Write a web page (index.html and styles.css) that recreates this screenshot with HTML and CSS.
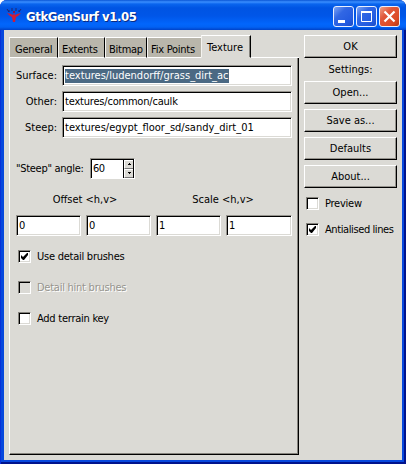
FILE: index.html
```html
<!DOCTYPE html>
<html lang="en">
<head>
<meta charset="utf-8">
<title>GtkGenSurf v1.05</title>
<link rel="stylesheet" href="styles.css">
</head>
<body>
<div class="window">
  <header class="titlebar">
    <svg class="app-icon" width="16" height="16" viewBox="0 0 16 16">
      <path d="M1 1l2 3M6 0v3M10 0v3M15 1l-2 3M2 3h2M12 3h2" stroke="#20276f" fill="none"/>
      <path d="M1 5l4 1 2 1 1-2 1 2 2-1 4-1-3 3-2 1-1 5H7L6 9 4 8z" fill="#d01c38"/>
      <path d="M7 3h2v2H7z" fill="#8b1746"/>
    </svg>
    <h1 class="title">GtkGenSurf v1.05</h1>
    <div class="controls">
      <button class="ctl"><svg width="21" height="21"><path d="M5 14h7v3H5z" fill="#fff"/></svg></button>
      <button class="ctl"><svg width="21" height="21"><path d="M5.500 6.500h10v9h-10zM5 6.500h11M5 5.500h11" stroke="#fff" fill="none"/></svg></button>
      <button class="ctl close"><svg width="21" height="21"><path d="M5.500 5.500l10 10M15.500 5.500l-10 10" stroke="#fff" stroke-width="2.200" fill="none"/></svg></button>
    </div>
  </header>
  <main class="client">
    <section class="notebook">
      <nav class="tabs">
        <span class="tab t1">General</span><span class="tab t2">Extents</span><span class="tab t3">Bitmap</span><span class="tab t4">Fix Points</span><span class="tab active">Texture</span><span class="rest"></span>
      </nav>
      <div class="page">
        <div class="row"><label>Surface:</label><div class="entry"><span class="selected">textures/ludendorff/grass_dirt_ac</span></div></div>
        <div class="row"><label>Other:</label><div class="entry"><span class="snug">textures/common/caulk</span></div></div>
        <div class="row"><label>Steep:</label><div class="entry"><span>textures/egypt_floor_sd/sandy_dirt_01</span></div></div>
        <div class="angle"><label>"Steep" angle:</label>
          <div class="spin"><span>60</span>
            <div class="arrows">
              <i><svg width="5" height="3"><path d="M2 0h1v1h1v1H1V1h1z"/></svg></i>
              <i><svg width="5" height="3"><path d="M1 0h3v1H3v1H2V1H1z"/></svg></i>
            </div>
          </div>
        </div>
        <div class="heads"><span>Offset &lt;h,v&gt;</span><span>Scale &lt;h,v&gt;</span></div>
        <div class="quad"><div class="entry">0</div><div class="entry">0</div><div class="entry">1</div><div class="entry">1</div></div>
        <div class="checks">
          <label class="check"><b class="box"><svg width="9" height="9"><path d="M1 3v3l2 2h1l4-5V1H7L3 5 1 3z"/></svg></b>Use detail brushes</label>
          <label class="check disabled"><b class="box"></b>Detail hint brushes</label>
          <label class="check"><b class="box"></b>Add terrain key</label>
        </div>
      </div>
    </section>
    <aside class="side">
      <button class="btn">OK</button>
      <div class="caption">Settings:</div>
      <button class="btn">Open...</button>
      <button class="btn">Save as...</button>
      <button class="btn">Defaults</button>
      <button class="btn">About...</button>
      <div class="options">
        <label class="check"><b class="box"></b>Preview</label>
        <label class="check"><b class="box"><svg width="9" height="9"><path d="M1 3v3l2 2h1l4-5V1H7L3 5 1 3z"/></svg></b><span class="long">Antialised lines</span></label>
      </div>
    </aside>
  </main>
</div>
</body>
</html>
```
FILE: styles.css
```css
* { box-sizing: border-box; }
body {
  margin: 0;
  background: #fff;
  color: #000;
  font: 11px/14px "DejaVu Sans Condensed", "DejaVu Sans", sans-serif;
  font-stretch: condensed;
  white-space: nowrap;
}
button { font: inherit; color: inherit; padding: 0; }
svg { display: block; }
.window {
  width: 406px;
  height: 464px;
  display: flex;
  flex-direction: column;
  background: #0748dd;
  border-radius: 7px 7px 0 0;
  overflow: hidden;
  box-shadow: inset 1px 0 #0831d9, inset -2px -2px #00138c;
}
.titlebar {
  height: 30px;
  padding: 0 6px 0 5px;
  display: flex;
  align-items: flex-start;
  background: linear-gradient(#0a55d5 0, #3a8eff 2px, #0a65ee 4px, #0054e3 8px, #0056e8 16px, #0266fc 24px, #0262f4 27px, #0042c8 30px);
}
.app-icon { margin: 8px 4px 0 1px; }
.title {
  margin: 9px 0 0;
  flex: 1;
  color: #fff;
  font: bold 13px/16px "DejaVu Sans Condensed", sans-serif;
  font-stretch: condensed;
  letter-spacing: -0.4px;
  text-shadow: 1px 1px #0a2a80;
}
.controls { display: flex; gap: 2px; margin-top: 6px; }
.ctl {
  width: 21px;
  height: 21px;
  border: 1px solid #e8efff;
  border-radius: 3px;
  background: linear-gradient(135deg, #7da4f4, #3167e4 35%, #245be0 75%, #1b4bc5);
}
.ctl svg { margin: -1px; }
.ctl.close { background: linear-gradient(135deg, #f0a088, #e0573a 35%, #dc4a25 75%, #b93812); }
.client {
  flex: 1;
  margin: 0 4px 4px;
  background: #dbdad5;
  display: flex;
  align-items: flex-start;
  gap: 5px;
  padding: 5px 5px 0;
}
.notebook { width: 290px; height: 420px; display: flex; flex-direction: column; }
.tabs { display: flex; height: 23px; align-items: flex-end; }
.tab {
  height: 21px;
  padding: 5px 0 0 4px;
  background: #b9b6ab;
  border-top: 1px solid #fff;
  border-left: 1px solid #f4f3ef;
  border-right: 1px solid #000;
  border-bottom: 1px solid #fff;
  letter-spacing: -0.25px;
}
.t1 { width: 49px; padding-left: 5px; }
.t2 { width: 47px; padding-left: 3px; }
.t3 { width: 42px; padding-left: 3px; }
.t4 { width: 54px; padding-left: 3px; border-right: 0; }
.tab.active { width: 50px; height: 23px; padding-left: 5px; letter-spacing: 0; background: #dbdad5; border-bottom-color: #dbdad5; box-shadow: inset -1px 0 #85837d; }
.rest { flex: 1; border-bottom: 1px solid #fff; }
.page {
  flex: 1;
  padding: 7px 6px 0 6px;
  border-left: 1px solid #fff;
  border-right: 1px solid #000;
  border-bottom: 1px solid #000;
  box-shadow: inset -1px -1px #85837d;
}
.row { display: flex; margin-bottom: 5px; align-items: center; }
.row label { width: 41px; margin-right: 5px; display: flex; justify-content: flex-end; }
.entry {
  height: 21px;
  flex: 1;
  background: #fff;
  border: 1px solid #96948e;
  border-right-color: #fff;
  border-bottom-color: #fff;
  box-shadow: inset 1px 1px #000, inset -1px -1px #dbdad5;
  padding: 3px 0 0 2px;
}
.snug { letter-spacing: -0.2px; }
.selected { background: #4b6983; color: #fff; display: inline-block; height: 14px; }
.angle { display: flex; align-items: center; margin-top: 20px; height: 21px; }
.angle label { width: 69px; margin-right: 5px; letter-spacing: -0.3px; }
.spin {
  width: 45px;
  height: 21px;
  background: #fff;
  display: flex;
  justify-content: space-between;
  border: 1px solid #96948e;
  border-right-color: #fff;
  border-bottom-color: #fff;
  box-shadow: inset 1px 1px #000;
}
.spin span { padding: 3px 0 0 2px; letter-spacing: -0.5px; }
.arrows { width: 11px; background: #dbdad5; border-left: 1px solid #000; border-right: 1px solid #000; border-top: 1px solid #000; }
.arrows i { height: 9px; display: flex; align-items: center; justify-content: center; border-top: 1px solid #fff; border-left: 1px solid #fff; border-bottom: 1px solid #777; }
.heads { display: flex; margin-top: 14px; height: 14px; }
.heads span { flex: 1; text-align: center; }
.quad { display: grid; grid-template-columns: 65px 65px 65px 66px; gap: 5px; margin-top: 8px; }
.checks { padding: 14px 0 0 2px; display: grid; gap: 18px; }
.check { display: flex; align-items: center; height: 13px; gap: 6px; letter-spacing: -0.25px; }
.long { letter-spacing: -0.4px; }
.box {
  width: 13px;
  height: 13px;
  flex: none;
  padding: 1px;
  background: #fff;
  border: 1px solid #85837d;
  border-right-color: #fff;
  border-bottom-color: #fff;
  box-shadow: inset 1px 1px #000, inset -1px -1px #dbdad5;
}
.disabled { color: #96948e; text-shadow: 1px 1px #fff; }
.disabled .box { background: #dbdad5; }
.side { width: 93px; display: flex; flex-direction: column; gap: 5px; }
.btn {
  height: 23px;
  background: #dbdad5;
  border: 1px solid #fff;
  border-right-color: #000;
  border-bottom-color: #000;
  box-shadow: inset -1px -1px #96948e;
}
.caption { height: 13px; text-align: center; }
.options { display: grid; gap: 13px; padding: 4px 0 0 2px; }
```
